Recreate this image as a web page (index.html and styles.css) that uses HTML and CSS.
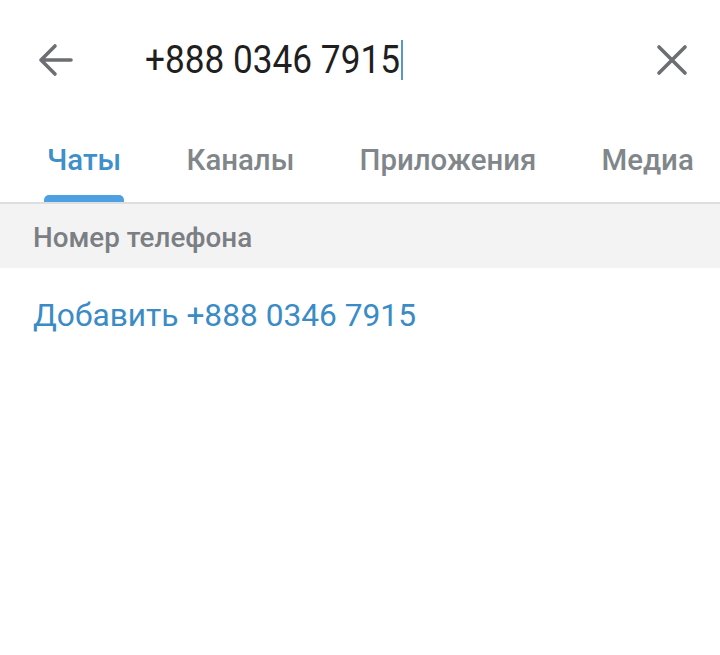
FILE: index.html
```html
<!DOCTYPE html>
<html lang="ru">
<head>
<meta charset="utf-8">
<link rel="stylesheet" href="styles.css">
</head>
<body>
<div class="screen">
  <header class="topbar">
    <button class="icon-btn back" aria-label="Назад">
      <svg width="40" height="40" viewBox="0 0 40 40"><path d="M36 20H6M20 6L6 20L20 34" fill="none" stroke="#6c6e72" stroke-width="3.6" stroke-linecap="round" stroke-linejoin="round"/></svg>
    </button>
    <div class="query"><span class="query-text">+888 0346 7915</span><span class="caret"></span></div>
    <button class="icon-btn close" aria-label="Очистить">
      <svg width="32" height="32" viewBox="0 0 32 32"><path d="M3 3L29 29M29 3L3 29" fill="none" stroke="#6c6e72" stroke-width="3.6" stroke-linecap="round"/></svg>
    </button>
  </header>
  <nav class="tabs">
    <div class="tab active">Чаты</div>
    <div class="tab">Каналы</div>
    <div class="tab">Приложения</div>
    <div class="tab">Медиа</div>
  </nav>
  <div class="section-header">Номер телефона</div>
  <div class="add-row">Добавить +888 0346 7915</div>
</div>
</body>
</html>
```
FILE: styles.css
```css
* { box-sizing: border-box; }
html, body { margin: 0; padding: 0; background: #ffffff; }
body { font-family: Roboto, "Noto Sans", sans-serif; }
.screen { width: 720px; height: 655px; overflow: hidden; background: #fff; }
.topbar {
  height: 120px;
  display: flex;
  align-items: center;
  padding: 0 20px 0 35px;
}
.icon-btn {
  border: 0; background: none; padding: 0; margin: 0;
  display: flex; align-items: center; justify-content: center;
}
.back { width: 40px; height: 40px; }
.query {
  flex: 1;
  display: flex;
  align-items: center;
  margin-left: 70px;
  font-size: 35.2px;
  color: #1f1f1f;
}
.query-text { display: inline-block; transform: scaleY(1.08); }
.caret { width: 2px; height: 40px; background: #5a97c6; margin-left: 1px; }
.close { width: 32px; height: 32px; margin-right: 12px; }
.tabs {
  display: flex;
  gap: 65.3px;
  padding-left: 47px;
  height: 84px;
  border-bottom: 2px solid #dedede;
}
.tab {
  position: relative;
  font-size: 29.4px;
  font-weight: 500;
  color: #80868a;
  display: flex;
  align-items: center;
  padding-top: 2px;
  padding-bottom: 4px;
}
.tab.active { color: #3f8fcb; }
.tab.active::after {
  content: "";
  position: absolute;
  left: -3px; right: -3px; bottom: 0;
  height: 7px;
  background: #4da0e2;
  border-radius: 5px 5px 0 0;
}
.section-header {
  background: #f3f3f3;
  height: 64px;
  padding-left: 33px;
  padding-top: 2px;
  display: flex;
  align-items: center;
  font-size: 27.8px;
  font-weight: 500;
  color: #7b7f83;
}
.add-row {
  height: 94px;
  padding-left: 33px;
  display: flex;
  align-items: center;
  font-size: 31.7px;
  color: #3b8bc6;
}
```
